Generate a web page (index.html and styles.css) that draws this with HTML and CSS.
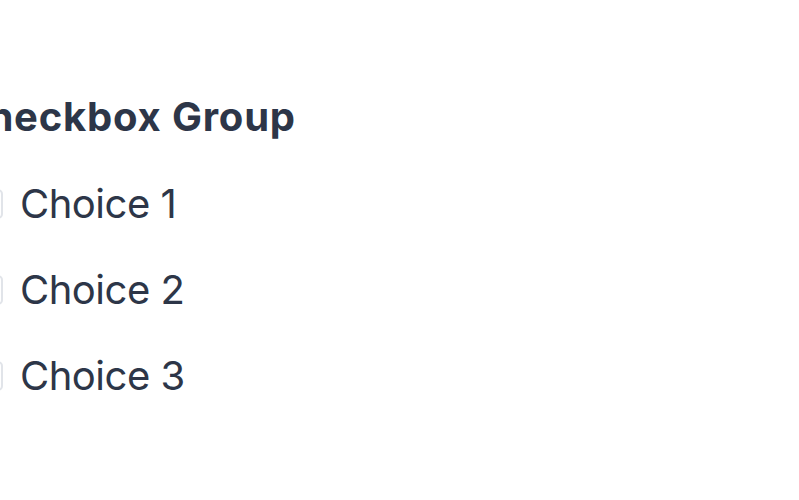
FILE: index.html
```html
<!DOCTYPE html>
<html lang="en">
<head>
<meta charset="utf-8">
<title>Checkbox Group</title>
<link rel="stylesheet" href="styles.css">
</head>
<body>
<fieldset class="group">
  <legend class="group-title">Checkbox Group</legend>
  <label class="choice"><span class="box"></span><span class="label">Choice 1</span></label>
  <label class="choice"><span class="box"></span><span class="label">Choice 2</span></label>
  <label class="choice"><span class="box"></span><span class="label">Choice 3</span></label>
</fieldset>
</body>
</html>
```

FILE: styles.css
```css
html, body {
  margin: 0;
  padding: 0;
  background: #ffffff;
  overflow: hidden;
}
body {
  font-family: Inter, "Noto Sans", sans-serif;
  color: #2d3648;
}
.group {
  border: 0;
  margin: 0 0 0 -27px;
  padding: 94px 0 0 0;
  display: flex;
  flex-direction: column;
  gap: 38px;
}
.group-title {
  float: left;
  padding: 0;
  margin: 0 0 2px -15px;
  font-size: 40px;
  font-weight: 700;
  line-height: 46px;
  letter-spacing: 0.8px;
}
.choice {
  display: flex;
  align-items: center;
  gap: 17px;
  height: 48px;
}
.box {
  width: 26px;
  height: 26px;
  border: 2px solid #e1e4e9;
  border-radius: 5px;
  flex: none;
}
.label {
  font-size: 40px;
  line-height: 48px;
  font-weight: 400;
  letter-spacing: -0.5px;
}
```
